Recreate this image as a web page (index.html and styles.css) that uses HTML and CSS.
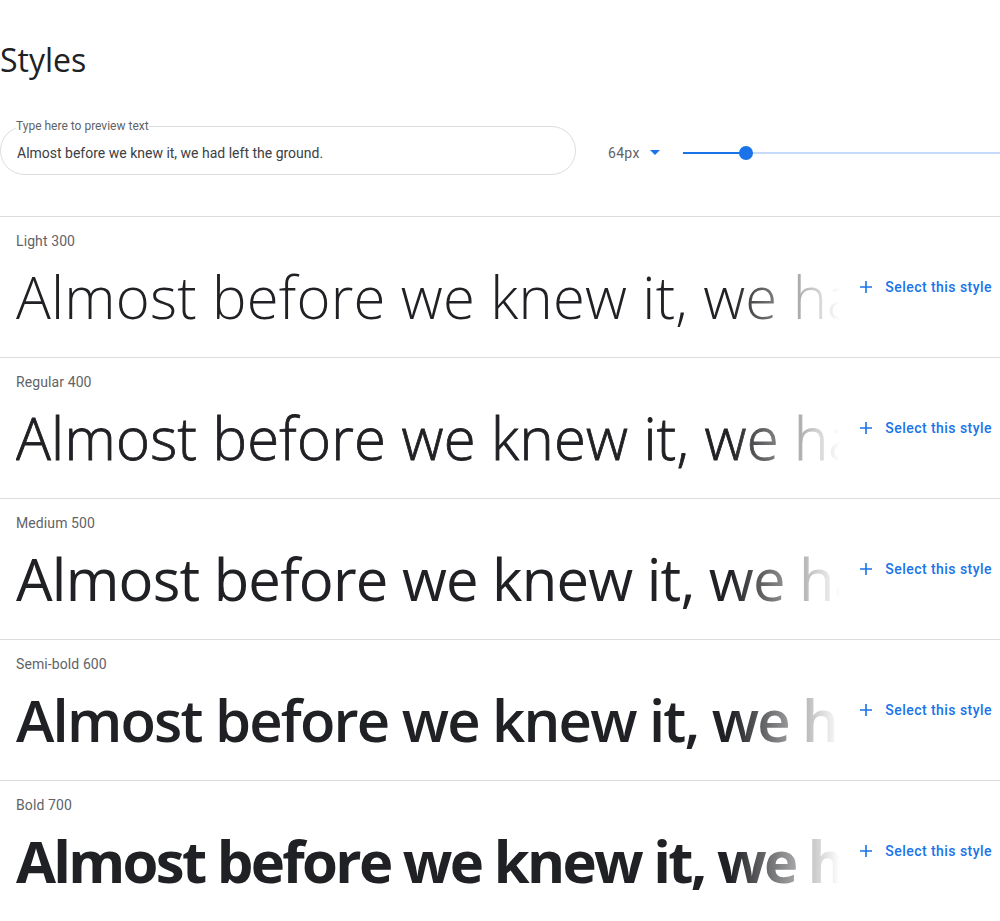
FILE: index.html
```html
<!DOCTYPE html>
<html lang="en">
<head>
<meta charset="utf-8">
<title>Styles</title>
<link rel="stylesheet" href="styles.css">
</head>
<body>
<main class="page">
  <h2 class="title">Styles</h2>

  <div class="controls">
    <fieldset class="preview-field">
      <legend class="preview-legend">Type here to preview text</legend>
      <input class="preview-input" type="text" value="Almost before we knew it, we had left the ground.">
    </fieldset>

    <button class="size-select" type="button">
      <span>64px</span>
      <svg class="caret" width="10" height="5" viewBox="0 0 10 5"><path d="M0 0h10L5 5z" fill="#1a73e8"/></svg>
    </button>

    <div class="slider">
      <div class="slider-track">
        <div class="slider-active" style="width:63px"></div>
        <div class="slider-thumb" style="left:63px"></div>
      </div>
    </div>
  </div>

  <section class="styles-list">
    <div class="style-row">
      <div class="style-main">
        <div class="style-label">Light 300</div>
        <div class="style-sample w300">Almost before we knew it, we had left the ground.</div>
      </div>
      <button class="select-btn" type="button">
        <svg width="12" height="12" viewBox="0 0 12 12"><path d="M6 0v12M0 6h12" stroke="#1a73e8" stroke-width="1.6"/></svg>
        <span>Select this style</span>
      </button>
    </div>

    <div class="style-row">
      <div class="style-main">
        <div class="style-label">Regular 400</div>
        <div class="style-sample w400">Almost before we knew it, we had left the ground.</div>
      </div>
      <button class="select-btn" type="button">
        <svg width="12" height="12" viewBox="0 0 12 12"><path d="M6 0v12M0 6h12" stroke="#1a73e8" stroke-width="1.6"/></svg>
        <span>Select this style</span>
      </button>
    </div>

    <div class="style-row">
      <div class="style-main">
        <div class="style-label">Medium 500</div>
        <div class="style-sample w500">Almost before we knew it, we had left the ground.</div>
      </div>
      <button class="select-btn" type="button">
        <svg width="12" height="12" viewBox="0 0 12 12"><path d="M6 0v12M0 6h12" stroke="#1a73e8" stroke-width="1.6"/></svg>
        <span>Select this style</span>
      </button>
    </div>

    <div class="style-row">
      <div class="style-main">
        <div class="style-label">Semi-bold 600</div>
        <div class="style-sample w600">Almost before we knew it, we had left the ground.</div>
      </div>
      <button class="select-btn" type="button">
        <svg width="12" height="12" viewBox="0 0 12 12"><path d="M6 0v12M0 6h12" stroke="#1a73e8" stroke-width="1.6"/></svg>
        <span>Select this style</span>
      </button>
    </div>

    <div class="style-row">
      <div class="style-main">
        <div class="style-label">Bold 700</div>
        <div class="style-sample w700">Almost before we knew it, we had left the ground.</div>
      </div>
      <button class="select-btn" type="button">
        <svg width="12" height="12" viewBox="0 0 12 12"><path d="M6 0v12M0 6h12" stroke="#1a73e8" stroke-width="1.6"/></svg>
        <span>Select this style</span>
      </button>
    </div>
  </section>
</main>
</body>
</html>
```

FILE: styles.css
```css
* { box-sizing: border-box; }

html, body {
  margin: 0;
  padding: 0;
  background: #fff;
  overflow: hidden;
}

body {
  font-family: Roboto, "Noto Sans", Arial, sans-serif;
  color: #202124;
}

.page {
  width: 1000px;
}

.title {
  margin: 40px 0 0 0;
  font-family: "Open Sans", Roboto, sans-serif;
  font-weight: 400;
  font-size: 32px;
  line-height: 40px;
  color: #202124;
  letter-spacing: 0;
}

.controls {
  display: flex;
  align-items: center;
  margin-top: 38px;
}

.preview-field {
  margin: 0;
  width: 576px;
  flex: none;
  padding: 0 15px 2px 15px;
  border: 1px solid #dadce0;
  border-radius: 26px;
}

.preview-legend {
  padding: 0;
  font-size: 12px;
  line-height: 16px;
  color: #5f6368;
  letter-spacing: 0;
}

.preview-input {
  display: block;
  width: 100%;
  height: 38px;
  border: 0;
  outline: none;
  padding: 0 0 0 1px;
  font-family: Roboto, sans-serif;
  font-size: 14px;
  color: #3c4043;
  background: transparent;
}

.size-select {
  display: flex;
  align-items: center;
  gap: 10px;
  margin-left: 32px;
  padding: 13px 0 0 0;
  border: 0;
  background: none;
  font-family: Roboto, sans-serif;
  font-size: 14px;
  color: #5f6368;
  letter-spacing: 0.3px;
}

.caret { display: block; margin-top: -1px; }

.slider {
  flex: 1;
  margin-left: 23px;
  margin-right: -40px;
  padding-top: 12px;
}

.slider-track {
  position: relative;
  height: 2px;
  background: #c6dafc;
}

.slider-active {
  height: 2px;
  background: #1a73e8;
}

.slider-thumb {
  position: absolute;
  top: -6px;
  width: 14px;
  height: 14px;
  margin-left: -7px;
  border-radius: 50%;
  background: #1a73e8;
}

.styles-list {
  margin-top: 41px;
  border-top: 1px solid #dadce0;
}

.style-row {
  display: flex;
  align-items: center;
  height: 141px;
  border-bottom: 1px solid #dadce0;
}

.style-main {
  flex: 1;
  min-width: 0;
  padding: 14px 0 20px 16px;
}

.style-label {
  font-size: 14px;
  line-height: 20px;
  color: #5f6368;
  letter-spacing: 0.1px;
}

.style-sample {
  margin-top: 6px;
  width: 824px;
  height: 80px;
  font-family: "Open Sans", Roboto, sans-serif;
  font-stretch: 90%;
  font-size: 58px;
  line-height: 80px;
  white-space: nowrap;
  overflow: hidden;
  letter-spacing: 0;
  color: #202124;
  -webkit-mask-image: linear-gradient(to right, #000 calc(100% - 110px), transparent 100%);
  mask-image: linear-gradient(to right, #000 calc(100% - 110px), transparent 100%);
}

.w300 { font-weight: 300; letter-spacing: 0.2px; }
.w400 { font-weight: 300; letter-spacing: 0.25px; -webkit-text-stroke: 0.8px #202124; }
.w500 { font-weight: 400; letter-spacing: -0.8px; }
.w600 { font-weight: 600; letter-spacing: -1.8px; }
.w700 { font-weight: 700; letter-spacing: -2.7px; }

.select-btn {
  flex: none;
  display: flex;
  align-items: center;
  gap: 13px;
  margin-left: 8px;
  padding: 0 8px 0 8px;
  border: 0;
  background: none;
  font-family: Roboto, sans-serif;
  font-weight: 500;
  font-size: 14px;
  color: #1a73e8;
  letter-spacing: 0.45px;
  white-space: nowrap;
}

.select-btn svg { display: block; }
```
